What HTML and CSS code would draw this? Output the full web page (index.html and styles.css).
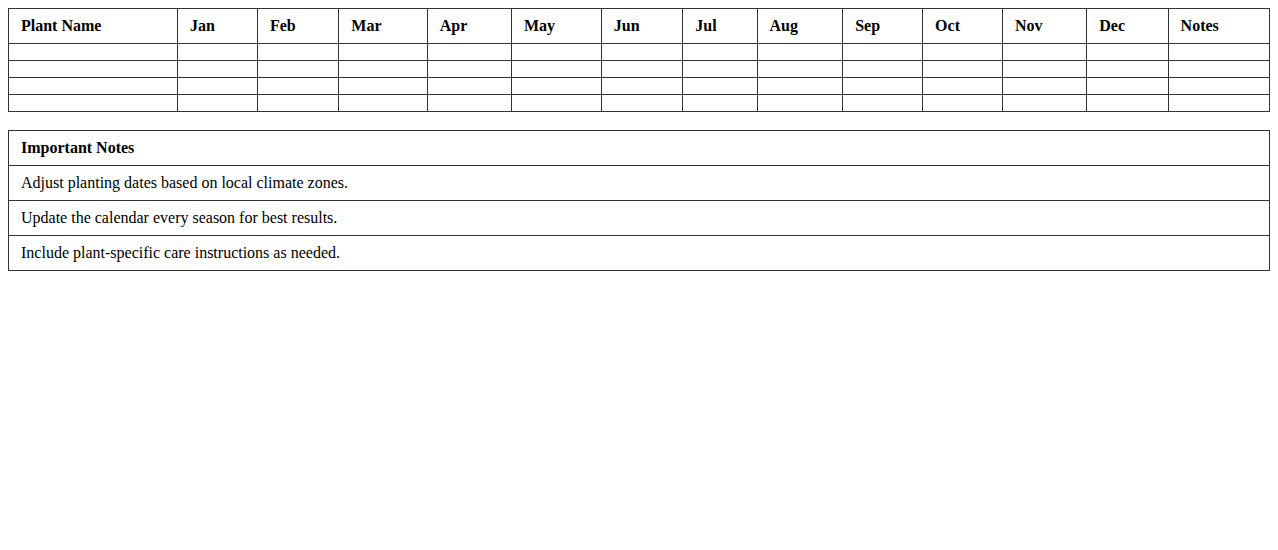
FILE: index.html
```html
<!DOCTYPE html>
<html>
<head>
<meta charset="utf-8">
<link rel="stylesheet" href="styles.css">
</head>
<body>
<table class="calendar">
  <thead>
    <tr>
      <th>Plant Name</th><th>Jan</th><th>Feb</th><th>Mar</th><th>Apr</th><th>May</th><th>Jun</th><th>Jul</th><th>Aug</th><th>Sep</th><th>Oct</th><th>Nov</th><th>Dec</th><th>Notes</th>
    </tr>
  </thead>
  <tbody>
    <tr><td></td><td></td><td></td><td></td><td></td><td></td><td></td><td></td><td></td><td></td><td></td><td></td><td></td><td></td></tr>
    <tr><td></td><td></td><td></td><td></td><td></td><td></td><td></td><td></td><td></td><td></td><td></td><td></td><td></td><td></td></tr>
    <tr><td></td><td></td><td></td><td></td><td></td><td></td><td></td><td></td><td></td><td></td><td></td><td></td><td></td><td></td></tr>
    <tr><td></td><td></td><td></td><td></td><td></td><td></td><td></td><td></td><td></td><td></td><td></td><td></td><td></td><td></td></tr>
  </tbody>
</table>
<table class="notes">
  <thead>
    <tr><th>Important Notes</th></tr>
  </thead>
  <tbody>
    <tr><td>Adjust planting dates based on local climate zones.</td></tr>
    <tr><td>Update the calendar every season for best results.</td></tr>
    <tr><td>Include plant-specific care instructions as needed.</td></tr>
  </tbody>
</table>
</body>
</html>
```
FILE: styles.css
```css
body {
  margin: 8px;
  font-family: "Liberation Serif", "Times New Roman", serif;
  font-size: 16px;
  color: #000;
  background: #fff;
}
table {
  width: 100%;
  border-collapse: collapse;
}
th, td {
  border: 1px solid #333;
  padding: 8px 12px;
  text-align: left;
}
th {
  font-weight: bold;
}
td {
  font-weight: normal;
}
.calendar {
  margin-bottom: 18px;
}
```
